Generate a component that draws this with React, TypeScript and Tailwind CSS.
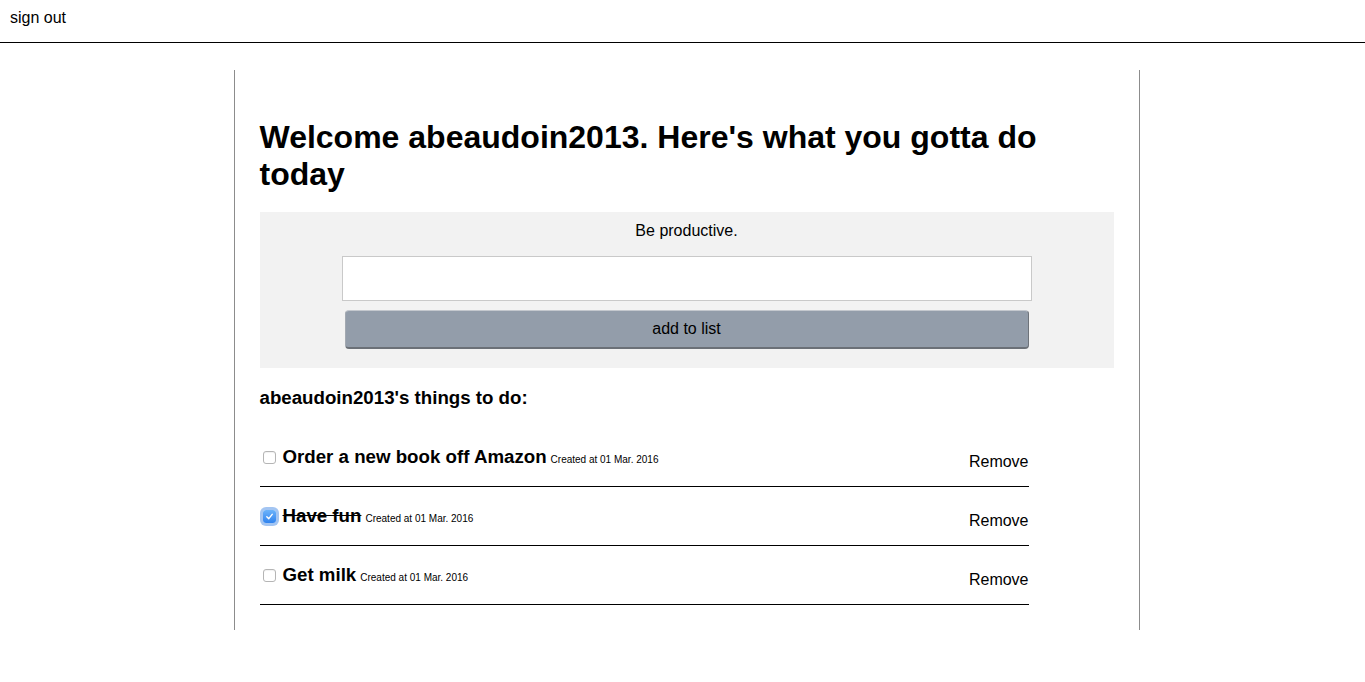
import React from 'react';

type Todo = { id: number; text: string; created: string; done: boolean };

const todos: Todo[] = [
  { id: 1, text: 'Order a new book off Amazon', created: '01 Mar. 2016', done: false },
  { id: 2, text: 'Have fun', created: '01 Mar. 2016', done: true },
  { id: 3, text: 'Get milk', created: '01 Mar. 2016', done: false },
];

const Checkbox: React.FC<{ checked: boolean }> = ({ checked }) => {
  if (checked) {
    return (
      <span className="ml-[3px] mr-[7px] flex h-[13px] w-[13px] shrink-0 items-center justify-center rounded-[3px] bg-gradient-to-b from-[#6cb3fa] to-[#2f83ee] shadow-[0_0_0_3px_rgba(88,150,232,0.55)]">
        <svg width="9" height="9" viewBox="0 0 10 10">
          <path d="M2 5.2 L4.2 7.4 L8 2.6" fill="none" stroke="#fff" strokeWidth="1.6" strokeLinecap="round" strokeLinejoin="round" />
        </svg>
      </span>
    );
  }
  return (
    <span className="ml-[3px] mr-[7px] h-[13px] w-[13px] shrink-0 rounded-[3px] border border-[#b5b5b5] bg-white shadow-[inset_0_1px_1px_rgba(0,0,0,0.06)]" />
  );
};

export default function App() {
  return (
    <div className="min-h-screen bg-white font-['Liberation_Sans',Arial,sans-serif] text-black">
      {/* top bar */}
      <div className="flex h-[43px] items-start border-b border-black px-[10px] pt-[8px]">
        <span className="text-[16px] leading-[20px]">sign out</span>
      </div>

      <div className="flex justify-center pl-[8px]">
        <div className="mt-[27px] w-[906px] border-x border-[#8c8c8c] px-[25px] pb-[25px] pt-[49px]">
          <h1 className="text-[32px] font-bold leading-[37px]">
            Welcome abeaudoin2013. Here's what you gotta do today
          </h1>

          <div className="mt-[19px] flex flex-col items-center bg-[#f2f2f2] pb-[19px] pt-[10px]">
            <p className="text-[16px] leading-[18px]">Be productive.</p>
            <input
              type="text"
              className="mt-[16px] h-[45px] w-[690px] border border-[#c9c9c9] bg-white px-2 outline-none"
            />
            <button className="mt-[9px] h-[39px] w-[684px] rounded-[4px] border-x border-t border-b-2 border-t-[#c4c8ce] border-l-[#a3a9b1] border-r-[#6e737a] border-b-[#6b7077] bg-[#939daa] text-[16px] text-black">
              add to list
            </button>
          </div>

          <h2 className="mt-[19px] text-[18.7px] font-bold leading-[22px]">abeaudoin2013's things to do:</h2>

          <ul className="mt-[19px] w-[769px]">
            {todos.map((todo) => (
              <li key={todo.id} className="flex h-[59px] items-center border-b border-black">
                <Checkbox checked={todo.done} />
                <div className="flex flex-1 items-baseline">
                  <span className={`text-[18.7px] font-bold ${todo.done ? 'line-through' : ''}`}>{todo.text}</span>
                  <span className="ml-[4px] text-[10px]">Created at {todo.created}</span>
                </div>
                <span className="pt-[10px] text-[16px]">Remove</span>
              </li>
            ))}
          </ul>
        </div>
      </div>
    </div>
  );
}
